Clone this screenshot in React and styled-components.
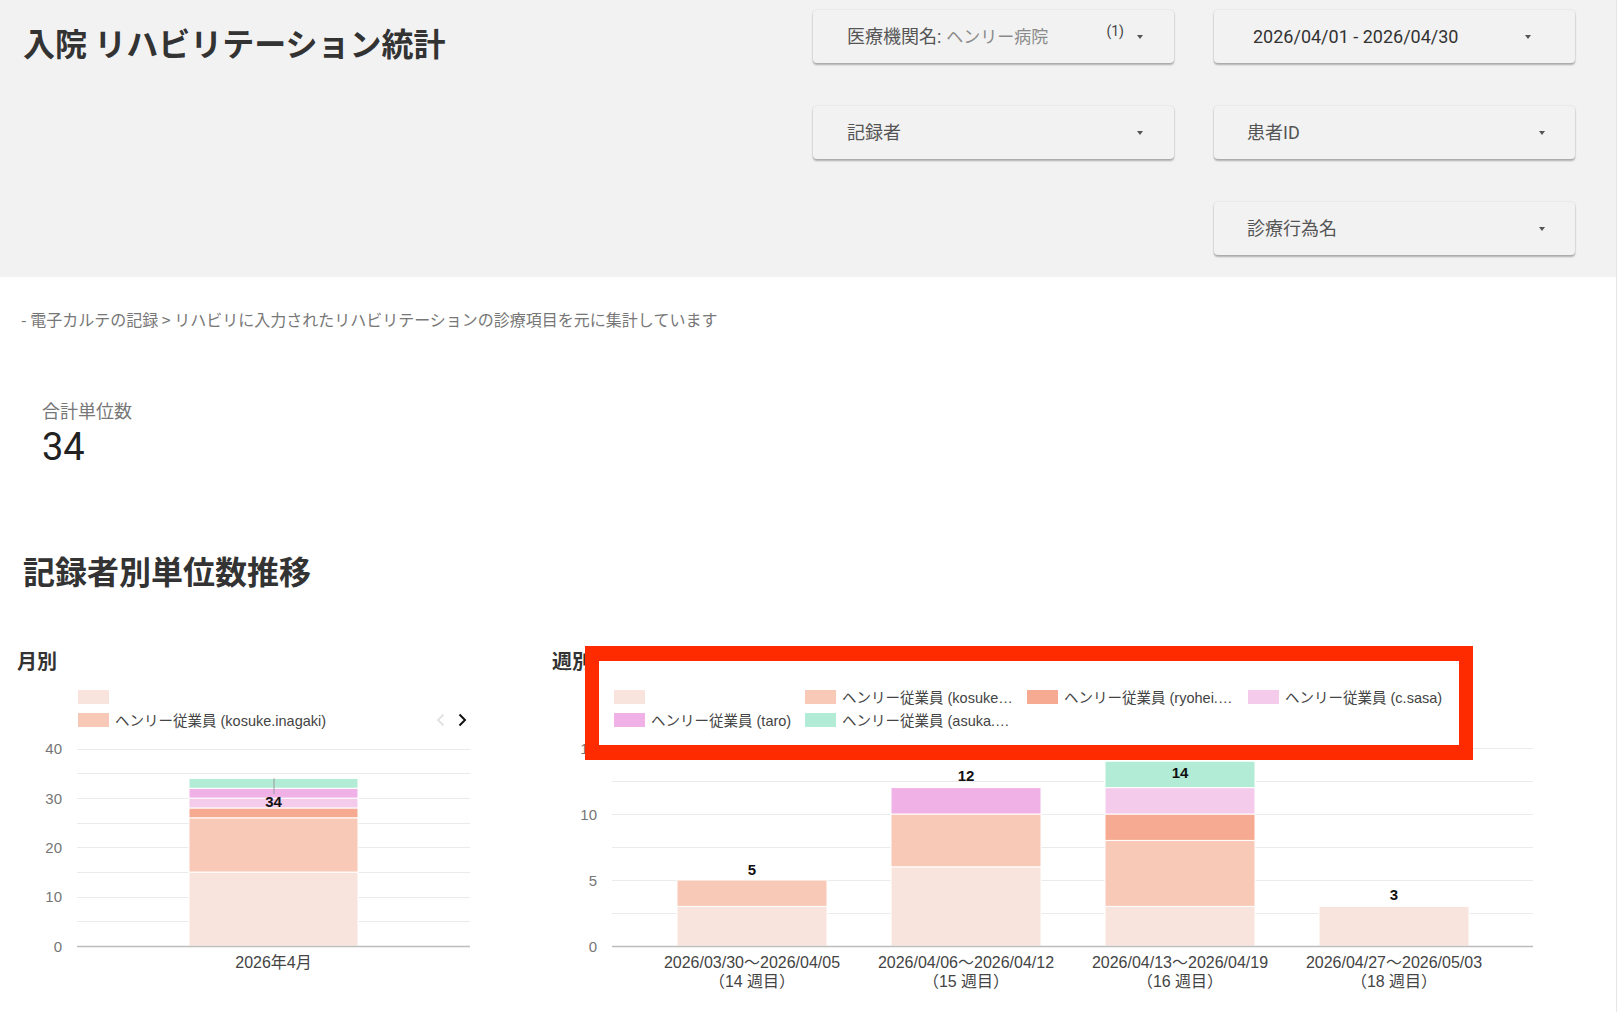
import React from 'react';
import styled, { createGlobalStyle } from 'styled-components';

const GlobalStyle = createGlobalStyle`
  html, body { margin: 0; padding: 0; overflow: hidden; background: #fff; }
  body { font-family: Roboto, "Noto Sans CJK JP", sans-serif; color: #333; }
  * { box-sizing: border-box; }
`;

const C = {
  c0: '#f9e4dd',
  c1: '#f9c9b8',
  c2: '#f5aa91',
  c3: '#f4cbeb',
  c4: '#f0b1e6',
  c5: '#b2ecd7',
};

const Page = styled.div`
  width: 1617px;
  min-height: 1012px;
  border-right: 1px solid #e6e6e6;
  background: #fff;
`;

const Header = styled.header`
  display: flex;
  align-items: flex-start;
  height: 277px;
  padding: 10px 41px 0 23px;
  background: #f2f2f2;
`;

const Title = styled.h1`
  margin: 12px 0 0;
  font-family: "Noto Sans CJK JP", sans-serif;
  font-size: 32px;
  font-weight: 700;
  line-height: 40px;
  color: #333;
`;

const FilterGrid = styled.div`
  margin-left: auto;
  display: grid;
  grid-template-columns: 361px 361px;
  grid-auto-rows: 53px;
  column-gap: 40px;
  row-gap: 43px;
`;

const FilterCard = styled.div`
  grid-column: ${p => p.$col};
  grid-row: ${p => p.$row};
  display: flex;
  align-items: center;
  height: 53px;
  padding-left: ${p => p.$pl}px;
  padding-right: ${p => p.$pr}px;
  background: #f2f2f2;
  border-radius: 4px;
  box-shadow: 0 2px 2px rgba(0, 0, 0, 0.28), 0 0 2px rgba(0, 0, 0, 0.12);
`;

const FilterText = styled.span`
  font-size: 18px;
  line-height: 24px;
  white-space: nowrap;
  color: ${p => (p.$dark ? '#333' : '#555')};
`;

const FilterSub = styled.span`
  margin-left: 5px;
  font-size: 17px;
  line-height: 24px;
  color: #8a8a8a;
  white-space: nowrap;
`;

const Count = styled.span`
  margin-left: auto;
  align-self: flex-start;
  margin-top: 13px;
  font-size: 14px;
  line-height: 16px;
  color: #444;
`;

const Caret = styled.span`
  margin-left: ${p => p.$ml || 'auto'};
  width: 0;
  height: 0;
  border-left: 3.5px solid transparent;
  border-right: 3.5px solid transparent;
  border-top: 4px solid #555;
`;

const Main = styled.main`
  display: flex;
  flex-direction: column;
`;

const Note = styled.p`
  margin: 30px 0 0 21px;
  font-family: "Noto Sans CJK JP", sans-serif;
  font-size: 16px;
  line-height: 24px;
  color: #777;
`;

const Metric = styled.div`
  margin: 69px 0 0 42px;
  display: flex;
  flex-direction: column;
  gap: 1px;
`;

const MetricLabel = styled.span`
  font-size: 18px;
  line-height: 24px;
  color: #777;
`;

const MetricValue = styled.span`
  font-size: 38px;
  line-height: 44px;
  color: #222;
`;

const SectionTitle = styled.h2`
  margin: 79px 0 0 23px;
  font-family: "Noto Sans CJK JP", sans-serif;
  font-size: 32px;
  font-weight: 700;
  line-height: 44px;
  color: #333;
`;

const ChartsRow = styled.section`
  display: grid;
  grid-template-columns: 535px 1fr;
  margin-top: 53px;
  padding-left: 17px;
`;

const ChartColumn = styled.div`
  position: relative;
  display: flex;
  flex-direction: column;
`;

const ChartHeading = styled.h3`
  margin: 0;
  height: 30px;
  padding-top: 2px;
  font-family: "Noto Sans CJK JP", sans-serif;
  font-size: 20px;
  font-weight: 700;
  line-height: 28px;
  color: #333;
`;

const Legend = styled.div`
  display: grid;
  grid-template-columns: ${p => p.$cols};
  grid-auto-rows: 23px;
  height: 48px;
  margin-top: 10px;
  padding-left: ${p => p.$pl}px;
  width: ${p => (p.$w ? `${p.$w}px` : 'auto')};
  box-sizing: content-box;
  font-family: "Liberation Sans", "Noto Sans CJK JP", sans-serif;
`;

const LegendItem = styled.div`
  display: flex;
  align-items: center;
  gap: 6px;
  white-space: nowrap;
  min-width: 0;
`;

const Swatch = styled.span`
  flex: none;
  width: 31px;
  height: 14px;
  background: ${p => p.$c};
`;

const LegendText = styled.span`
  font-size: 14.5px;
  color: #444;
`;

const Pager = styled.div`
  margin-left: auto;
  display: flex;
  align-items: center;
  gap: 13px;
`;

const ChartSvg = styled.svg`
  display: block;
  overflow: visible;
  font-family: "Liberation Sans", "Noto Sans CJK JP", sans-serif;
`;

const Highlight = styled.div`
  position: absolute;
  top: 1px;
  left: 33px;
  width: 888px;
  height: 114px;
  border-style: solid;
  border-color: #fe2a00;
  border-width: 15px 14px;
  pointer-events: none;
`;

function Chevron({ dir, color }) {
  const d = dir === 'left' ? 'M7.5 1.5 L2 7 L7.5 12.5' : 'M1.5 1.5 L7 7 L1.5 12.5';
  return (
    <svg width="9" height="14" viewBox="0 0 9 14">
      <path d={d} fill="none" stroke={color} strokeWidth="2" strokeLinejoin="miter" />
    </svg>
  );
}

function StackedChart({ cfg }) {
  const { width, height, plotL, plotR, base, unit, gridStep, max, labelStep, labelRight, bars } = cfg;
  const grid = [];
  for (let v = gridStep; v <= max + 1e-6; v += gridStep) grid.push(v);
  const ticks = [];
  for (let v = 0; v <= max + 1e-6; v += labelStep) ticks.push(v);
  return (
    <ChartSvg width={width} height={height} viewBox={`0 0 ${width} ${height}`}>
      {grid.map(v => {
        const y = Math.round(base - v * unit) + 0.5;
        return <line key={v} x1={plotL} x2={plotR} y1={y} y2={y} stroke="#ebebeb" strokeWidth="1" />;
      })}
      {ticks.map(v => (
        <text key={v} x={labelRight} y={base - v * unit} textAnchor="end" dominantBaseline="central" fontSize="15" fill="#767676">
          {v}
        </text>
      ))}
      {bars.map((b, i) => {
        let acc = 0;
        const cx = b.x + b.w / 2;
        const top = base - b.segs.reduce((s, [, n]) => s + n, 0) * unit;
        return (
          <g key={i}>
            {b.segs.map(([c, n], j) => {
              const y0 = base - acc * unit;
              const y1 = base - (acc + n) * unit;
              acc += n;
              return <rect key={j} x={b.x} y={y1} width={b.w} height={y0 - y1} fill={c} stroke="#fff" strokeWidth="1" />;
            })}
            {b.annLine && <line x1={cx + 0.5} x2={cx + 0.5} y1={top} y2={b.annLine} stroke="#9a9a9a" strokeWidth="1" />}
            <text x={cx} y={b.annY} textAnchor="middle" dominantBaseline="central" fontSize="15" fontWeight="700" fill="#111">
              {b.ann}
            </text>
            {b.xl.map((t, k) => (
              <text key={k} x={cx} y={229 + k * 19} textAnchor="middle" dominantBaseline="central" fontSize="16" fill="#444">
                {t}
              </text>
            ))}
          </g>
        );
      })}
      <line x1={plotL} x2={plotR} y1={base + 0.5} y2={base + 0.5} stroke="#bdbdbd" strokeWidth="1.5" />
    </ChartSvg>
  );
}

const monthly = {
  width: 513,
  height: 270,
  plotL: 60,
  plotR: 453,
  base: 213,
  unit: 4.93,
  gridStep: 5,
  max: 40,
  labelStep: 10,
  labelRight: 45,
  bars: [
    {
      x: 172,
      w: 169,
      segs: [[C.c0, 15], [C.c1, 11], [C.c2, 2], [C.c3, 2], [C.c4, 2], [C.c5, 2]],
      ann: '34',
      annY: 68,
      annLine: 61,
      xl: ['2026年4月'],
    },
  ],
};

const weekly = {
  width: 1000,
  height: 270,
  plotL: 60,
  plotR: 981,
  base: 213,
  unit: 13.2,
  gridStep: 2.5,
  max: 15,
  labelStep: 5,
  labelRight: 45,
  bars: [
    { x: 125, w: 150, segs: [[C.c0, 3], [C.c1, 2]], ann: '5', annY: 136, xl: ['2026/03/30〜2026/04/05', '（14 週目）'] },
    { x: 339, w: 150, segs: [[C.c0, 6], [C.c1, 4], [C.c4, 2]], ann: '12', annY: 42, xl: ['2026/04/06〜2026/04/12', '（15 週目）'] },
    {
      x: 553,
      w: 150,
      segs: [[C.c0, 3], [C.c1, 5], [C.c2, 2], [C.c3, 2], [C.c5, 2]],
      ann: '14',
      annY: 39,
      xl: ['2026/04/13〜2026/04/19', '（16 週目）'],
    },
    { x: 767, w: 150, segs: [[C.c0, 3]], ann: '3', annY: 161, xl: ['2026/04/27〜2026/05/03', '（18 週目）'] },
  ],
};

const weeklyLegend = [
  { c: C.c0, t: '' },
  { c: C.c1, t: 'ヘンリー従業員 (kosuke…' },
  { c: C.c2, t: 'ヘンリー従業員 (ryohei.…' },
  { c: C.c3, t: 'ヘンリー従業員 (c.sasa)' },
  { c: C.c4, t: 'ヘンリー従業員 (taro)' },
  { c: C.c5, t: 'ヘンリー従業員 (asuka.…' },
];

export default function App() {
  return (
    <Page>
      <GlobalStyle />
      <Header>
        <Title>入院 リハビリテーション統計</Title>
        <FilterGrid>
          <FilterCard $col={1} $row={1} $pl={34} $pr={31}>
            <FilterText>医療機関名:</FilterText>
            <FilterSub>ヘンリー病院</FilterSub>
            <Count>(1)</Count>
            <Caret $ml="13px" />
          </FilterCard>
          <FilterCard $col={2} $row={1} $pl={39} $pr={44}>
            <FilterText $dark>2026/04/01 - 2026/04/30</FilterText>
            <Caret />
          </FilterCard>
          <FilterCard $col={1} $row={2} $pl={34} $pr={31}>
            <FilterText>記録者</FilterText>
            <Caret />
          </FilterCard>
          <FilterCard $col={2} $row={2} $pl={33} $pr={30}>
            <FilterText>患者ID</FilterText>
            <Caret />
          </FilterCard>
          <FilterCard $col={2} $row={3} $pl={33} $pr={30}>
            <FilterText>診療行為名</FilterText>
            <Caret />
          </FilterCard>
        </FilterGrid>
      </Header>
      <Main>
        <Note>- 電子カルテの記録 &gt; リハビリに入力されたリハビリテーションの診療項目を元に集計しています</Note>
        <Metric>
          <MetricLabel>合計単位数</MetricLabel>
          <MetricValue>34</MetricValue>
        </Metric>
        <SectionTitle>記録者別単位数推移</SectionTitle>
        <ChartsRow>
          <ChartColumn>
            <ChartHeading>月別</ChartHeading>
            <Legend $cols="1fr" $pl={61} $w={389}>
              <LegendItem>
                <Swatch $c={C.c0} />
              </LegendItem>
              <LegendItem>
                <Swatch $c={C.c1} />
                <LegendText>ヘンリー従業員 (kosuke.inagaki)</LegendText>
                <Pager>
                  <Chevron dir="left" color="#e2e2e2" />
                  <Chevron dir="right" color="#111" />
                </Pager>
              </LegendItem>
            </Legend>
            <StackedChart cfg={monthly} />
          </ChartColumn>
          <ChartColumn>
            <ChartHeading>週別</ChartHeading>
            <Legend $cols="191px 222px 221px auto" $pl={62}>
              {weeklyLegend.map((l, i) => (
                <LegendItem key={i}>
                  <Swatch $c={l.c} />
                  {l.t && <LegendText>{l.t}</LegendText>}
                </LegendItem>
              ))}
            </Legend>
            <StackedChart cfg={weekly} />
            <Highlight />
          </ChartColumn>
        </ChartsRow>
      </Main>
    </Page>
  );
}
